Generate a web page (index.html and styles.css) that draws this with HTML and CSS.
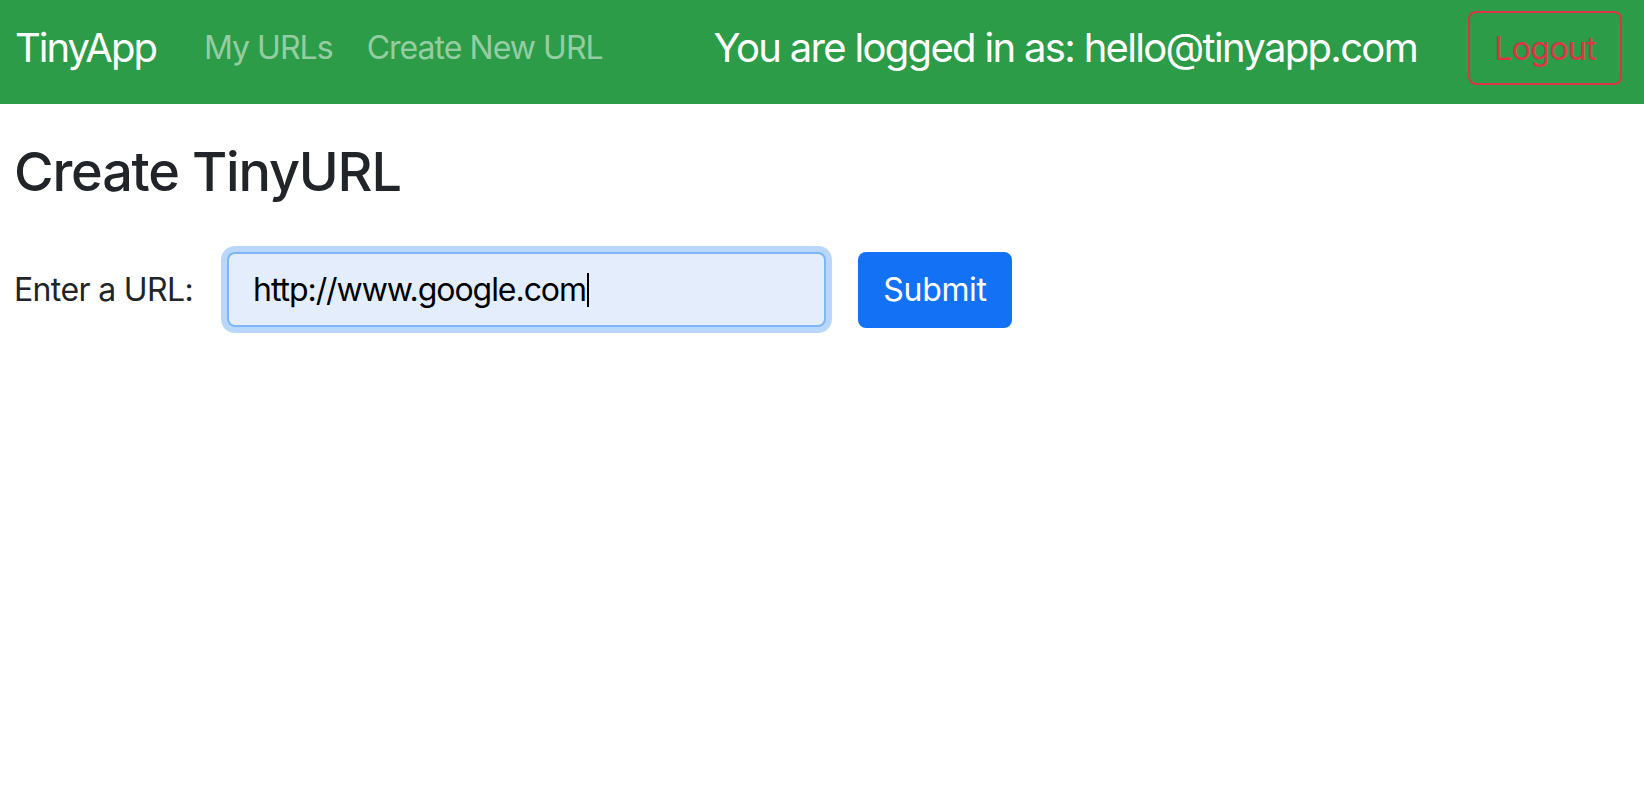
FILE: index.html
```html
<!DOCTYPE html>
<html lang="en">
<head>
<meta charset="utf-8">
<title>TinyApp - Create TinyURL</title>
<link rel="stylesheet" href="styles.css">
</head>
<body>
<nav class="navbar">
  <a class="brand" href="#">TinyApp</a>
  <div class="nav-links">
    <a class="nav-link" href="#">My URLs</a>
    <a class="nav-link" href="#">Create New URL</a>
  </div>
  <div class="user-area">
    <span class="user-text">You are logged in as: hello@tinyapp.com</span>
    <button class="btn-logout" type="button">Logout</button>
  </div>
</nav>
<main class="content">
  <h1 class="title">Create TinyURL</h1>
  <form class="url-form">
    <label class="url-label" for="longURL">Enter a URL:</label>
    <div class="url-field" id="longURL"><span class="url-text">http://www.google.com</span><span class="caret"></span></div>
    <button class="btn-submit" type="button">Submit</button>
  </form>
</main>
</body>
</html>
```
FILE: styles.css
```css
html, body {
  margin: 0;
  padding: 0;
  background: #ffffff;
}

body {
  font-family: "Inter", "Liberation Sans", Arial, sans-serif;
  color: #212529;
}

.navbar {
  display: flex;
  align-items: center;
  box-sizing: border-box;
  height: 104px;
  padding: 11px 22px 19px 15px;
  background: #2c9c48;
  white-space: nowrap;
}

.brand {
  flex-shrink: 0;
  font-size: 40px;
  letter-spacing: -0.05em;
  color: #ffffff;
  text-decoration: none;
  margin-right: 32px;
  line-height: 1.2;
}

.nav-links {
  display: flex;
  flex-shrink: 0;
  gap: 2px;
}

.nav-link {
  font-size: 32px;
  letter-spacing: -0.03em;
  color: rgba(255, 255, 255, 0.5);
  text-decoration: none;
  padding: 0 16px;
  line-height: 1.5;
}

.user-area {
  margin-left: auto;
  display: flex;
  flex-shrink: 0;
  align-items: center;
  gap: 51px;
}

.user-text {
  font-size: 40px;
  letter-spacing: -0.042em;
  color: #ffffff;
  line-height: 1.2;
}

.btn-logout {
  box-sizing: border-box;
  width: 154px;
  height: 74px;
  border: 2px solid #dc3545;
  border-radius: 8px;
  background: transparent;
  color: #dc3545;
  font-family: inherit;
  font-size: 32px;
  letter-spacing: -0.02em;
  padding: 0;
}

.content {
  padding: 0 14px;
}

.title {
  margin: 36px 0 0;
  font-size: 54px;
  font-weight: 500;
  letter-spacing: -0.022em;
  line-height: 1.2;
  color: #212529;
}

.url-form {
  display: flex;
  align-items: center;
  margin-top: 47px;
  padding-bottom: 8px;
  white-space: nowrap;
}

.url-label {
  flex-shrink: 0;
  font-size: 32px;
  letter-spacing: -0.02em;
  color: #212529;
  margin-right: 34px;
}

.url-field {
  flex-shrink: 0;
  box-sizing: border-box;
  width: 599px;
  height: 75px;
  display: flex;
  align-items: center;
  padding-left: 24px;
  border: 2px solid #7fb6f7;
  border-radius: 8px;
  background: #e3edfc;
  box-shadow: 0 0 0 6px #b8d7fa;
  font-size: 32px;
  letter-spacing: -0.033em;
  color: #000000;
}

.caret {
  display: inline-block;
  width: 2px;
  height: 34px;
  margin-left: 1px;
  background: #000000;
}

.btn-submit {
  flex-shrink: 0;
  box-sizing: border-box;
  width: 154px;
  height: 76px;
  margin-left: 32px;
  border: none;
  border-radius: 8px;
  background: #1371f6;
  color: #ffffff;
  font-family: inherit;
  font-size: 32px;
  letter-spacing: -0.01em;
  padding: 0;
}
```
